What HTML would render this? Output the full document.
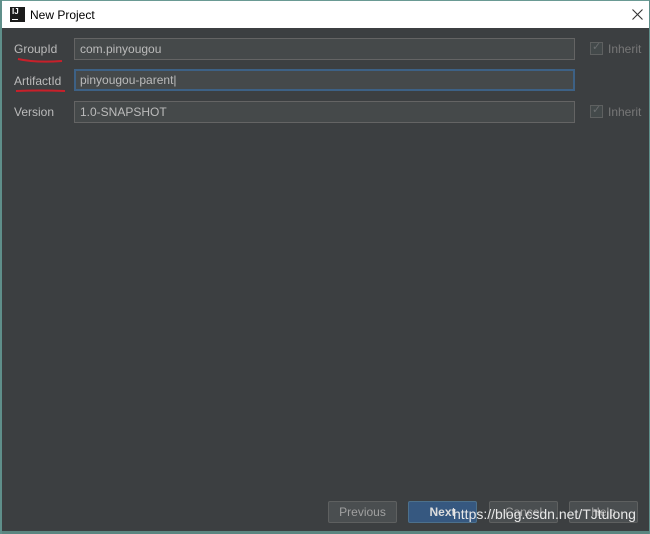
<!DOCTYPE html>
<html><head><meta charset="utf-8"><style>
*{margin:0;padding:0;box-sizing:border-box}
body{width:650px;height:534px;overflow:hidden;background:#3c3f41;font-family:"Liberation Sans",sans-serif;position:relative}
.bl{position:absolute;left:0;top:0;width:2px;height:534px;background:#5f8f8a}
.br{position:absolute;right:0;top:0;width:1px;height:534px;background:#5f8f8a}
.title{position:absolute;left:0;top:0;width:650px;height:28px;background:#fff;border-top:1px solid #6a9a94}
.title .t{position:absolute;left:30px;top:7px;font-size:12px;color:#000}
.ico{position:absolute;left:10px;top:6px;width:15px;height:15px;background:#1b1b1b;color:#fff;font-size:8px;font-weight:bold;line-height:10px;padding-left:2px}
.ico:after{content:"";position:absolute;left:2px;bottom:2px;width:6px;height:1.5px;background:#fff}
.lbl{position:absolute;left:14px;font-size:12px;color:#bbbbbb}
.f{position:absolute;left:74px;width:501px;height:22px;background:#45494a;border:1px solid #646464;color:#bbbbbb;font-size:12px;padding:4px 5px;line-height:13px}
.f.focus{border:2px solid #3d6185;padding:3px 4px}
.chk{position:absolute;left:590px;width:13px;height:13px;border:1px solid #5e6060;background:#43494a}
.chk:after{content:"✓";position:absolute;left:1px;top:-3px;font-size:11px;color:#6a6d6f}
.inh{position:absolute;left:608px;font-size:12px;color:#777}
.btn{position:absolute;top:501px;width:69px;height:22px;border:1px solid #5e6060;background:#4a4e50;color:#a0a0a0;font-size:12px;text-align:center;line-height:20px;border-radius:2px}
.btn.p{background:#365880;border-color:#4c708c;color:#ddd;font-weight:bold}
.wm{position:absolute;left:453px;top:506px;font-size:14px;color:#e8e8e8}
.bot{position:absolute;left:0;top:531px;width:650px;height:3px;background:#5b8580}
</style></head><body>
<div class="title"><div class="ico">IJ</div><div class="t">New Project</div>
<svg style="position:absolute;left:632px;top:8px" width="11" height="11"><path d="M0.5 0.5L10.5 10.5M10.5 0.5L0.5 10.5" stroke="#333" stroke-width="1.1"/></svg></div>
<div class="lbl" style="top:42px">GroupId</div>
<svg style="position:absolute;left:16px;top:57px" width="48" height="8"><path d="M2 2 Q20 6 46 4" stroke="#c8202a" stroke-width="2" fill="none"/></svg>
<div class="f" style="top:38px">com.pinyougou</div>
<div class="chk" style="top:42px"></div><div class="inh" style="top:42px">Inherit</div>
<div class="lbl" style="top:74px">ArtifactId</div>
<svg style="position:absolute;left:14px;top:88px" width="54" height="6"><path d="M2 3 Q25 2 51 3" stroke="#c8202a" stroke-width="2" fill="none"/></svg>
<div class="f focus" style="top:69px">pinyougou-parent|</div>
<div class="lbl" style="top:105px">Version</div>
<div class="f" style="top:101px">1.0-SNAPSHOT</div>
<div class="chk" style="top:105px"></div><div class="inh" style="top:105px">Inherit</div>
<div class="btn" style="left:328px">Previous</div>
<div class="btn p" style="left:408px">Next</div>
<div class="btn" style="left:489px">Cancel</div>
<div class="btn" style="left:569px">Help</div>
<div class="wm">https://blog.csdn.net/TJtulong</div>
<div class="bot"></div>
<div class="bl"></div><div class="br"></div>
</body></html>
